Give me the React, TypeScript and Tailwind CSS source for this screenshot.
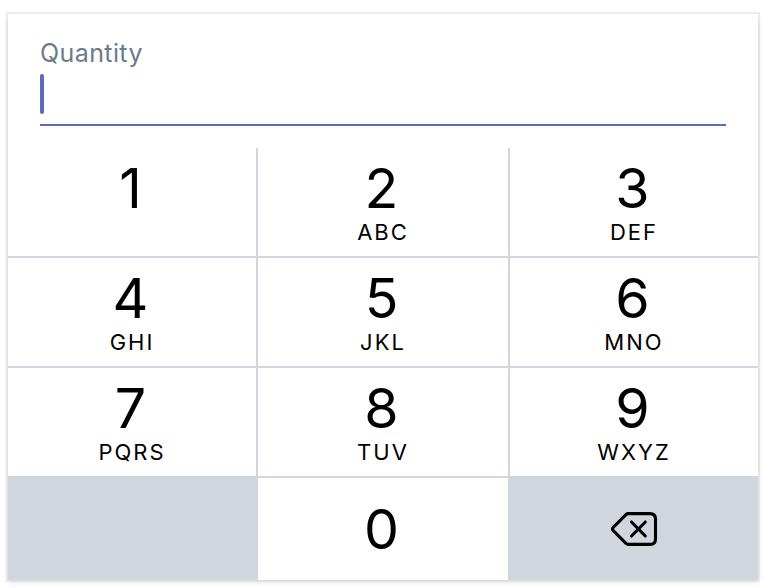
const keys = [
  ["1", ""], ["2", "ABC"], ["3", "DEF"],
  ["4", "GHI"], ["5", "JKL"], ["6", "MNO"],
  ["7", "PQRS"], ["8", "TUV"], ["9", "WXYZ"],
];

function Key({ digit, letters }: { digit: string; letters: string }) {
  return (
    <button className="flex flex-col items-center bg-white pt-[11px] pr-[3px]">
      <span className="h-[58px] text-[55.5px] leading-[58px]">{digit}</span>
      <span className="mt-[3px] pl-[3px] text-[22px] leading-[24px] tracking-[2px]">{letters}</span>
    </button>
  );
}

export default function App() {
  return (
    <div className="h-[588px] w-[766px] bg-white pl-2 pt-[14px] font-['Inter',sans-serif] text-black">
      <div className="flex h-[566px] w-[750px] flex-col bg-white shadow-[0_0_0_2px_rgba(0,0,0,0.06),0_2px_6px_rgba(0,0,0,0.12)]">
        <div className="h-[134px] px-8 pt-6">
          <label className="block h-[36px] text-[25px] leading-[30px] tracking-[0.4px] text-[#6b7b8b]">Quantity</label>
          <div className="h-[52px] border-b-2 border-[#5c6bc0]">
            <div className="h-10 w-1 rounded-sm bg-[#5c6bc0]" />
          </div>
        </div>
        <div className="grid h-[432px] grid-cols-[248px_250px_248px] grid-rows-[108px_108px_108px_102px] gap-[2px] bg-[#d1d5de]">
          {keys.map(([d, l]) => <Key key={d} digit={d} letters={l} />)}
          <div />
          <button className="flex items-center justify-center bg-white pr-[3px] text-[55.5px] leading-[58px]">0</button>
          <button className="flex items-center justify-center">
            <svg width="48" height="36" viewBox="0 0 48 36" fill="none" stroke="black" strokeWidth="3.1" strokeLinecap="round" strokeLinejoin="round">
              <path d="M18.3 2.6H40Q45.5 2.6 45.5 8.1V27.9Q45.5 33.4 40 33.4H18.3Q17 33.4 16 32.4L3 19.3Q1.9 18 3 16.7L16 3.6Q17 2.6 18.3 2.6Z" />
              <path d="M21.5 11L35.3 25M35.3 11L21.5 25" />
            </svg>
          </button>
        </div>
      </div>
    </div>
  );
}
